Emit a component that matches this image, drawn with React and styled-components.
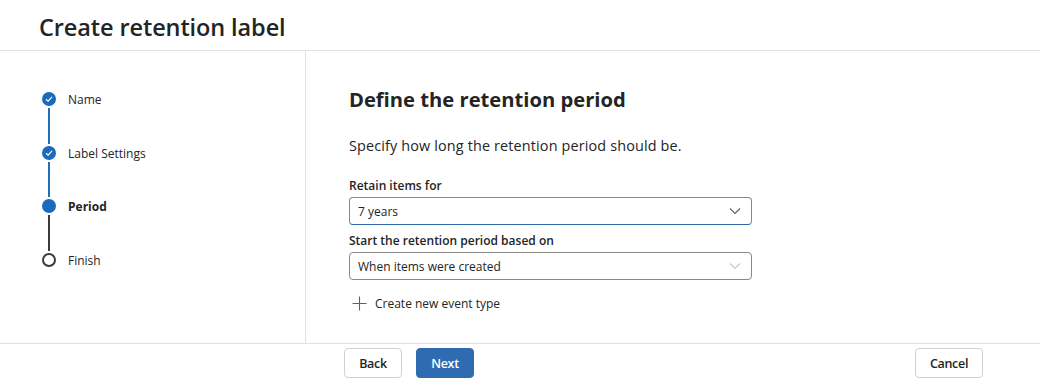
import React from 'react';
import styled, { createGlobalStyle } from 'styled-components';

const Global = createGlobalStyle`
  html, body {
    margin: 0;
    padding: 0;
    background: #fff;
  }
  body {
    font-family: "Open Sans", "Noto Sans", sans-serif;
    color: #242424;
  }
`;

const Page = styled.div`
  width: 1040px;
  height: 382px;
  display: flex;
  flex-direction: column;
  overflow: hidden;
`;

const Header = styled.header`
  height: 51px;
  flex: 0 0 51px;
  display: flex;
  align-items: center;
  padding-left: 39px;
  border-bottom: 1px solid #e1e1e1;
  box-sizing: border-box;
`;

const Title = styled.h1`
  margin: 0;
  font-size: 23.5px;
  font-weight: 600;
  letter-spacing: -0.1px;
  color: #242424;
  padding-top: 4px;
`;

const Body = styled.div`
  flex: 0 0 292px;
  display: flex;
`;

const Sidebar = styled.nav`
  width: 306px;
  flex: 0 0 306px;
  box-sizing: border-box;
  border-right: 1px solid #e1e1e1;
  padding: 41px 0 0 42px;
`;

const StepRow = styled.div`
  display: flex;
  gap: 12px;
  height: ${p => (p.last ? '14px' : '53.5px')};
`;

const Marker = styled.div`
  width: 14px;
  display: flex;
  flex-direction: column;
  align-items: center;
`;

const Dot = styled.div`
  width: 14px;
  height: 14px;
  flex: 0 0 14px;
  border-radius: 50%;
  box-sizing: border-box;
  display: flex;
  align-items: center;
  justify-content: center;
  background: ${p => (p.state === 'todo' ? '#fff' : '#1b6bbd')};
  border: ${p => (p.state === 'todo' ? '2px solid #3b3b3b' : 'none')};
`;

const Connector = styled.div`
  width: 2px;
  flex: 1;
  margin: 2px 0;
  background: ${p => (p.done ? '#1f6eb6' : '#3b3b3b')};
`;

const StepLabel = styled.span`
  font-size: 12px;
  line-height: 15px;
  font-weight: ${p => (p.current ? 700 : 400)};
  color: #242424;
`;

const Main = styled.main`
  flex: 1;
  padding: 34px 0 0 43px;
  box-sizing: border-box;
`;

const Heading = styled.h2`
  margin: 0;
  font-size: 20.2px;
  line-height: 28px;
  font-weight: 700;
  color: #242424;
`;

const Description = styled.p`
  margin: 23px 0 0;
  font-size: 14.4px;
  line-height: 20px;
  letter-spacing: 0.15px;
  color: #242424;
`;

const FieldLabel = styled.div`
  margin-top: ${p => p.gap}px;
  font-size: 12px;
  line-height: 18px;
  font-weight: 600;
  color: #242424;
`;

const Select = styled.div`
  margin-top: 2px;
  width: 403px;
  height: 28px;
  box-sizing: border-box;
  border: 1px solid #8a8886;
  border-bottom: 1px solid ${p => (p.focused ? '#2f6aa8' : '#8a8886')};
  border-radius: 4px;
  display: flex;
  align-items: center;
  justify-content: space-between;
  padding: 0 10px 0 8px;
  font-size: 12px;
  color: #242424;
`;

const Chevron = ({ light }) => (
  <svg width="12" height="8" viewBox="0 0 12 8">
    <path d="M1 1.5 L6 6.5 L11 1.5" fill="none" stroke={light ? '#c8c8c8' : '#616161'} strokeWidth="1.1" />
  </svg>
);

const AddLink = styled.div`
  margin-top: 15px;
  display: flex;
  align-items: center;
  gap: 8px;
  font-size: 12px;
  color: #242424;
  padding-left: 3px;
`;

const Footer = styled.footer`
  flex: 1;
  border-top: 1px solid #e1e1e1;
  display: flex;
  align-items: flex-start;
  padding: 4px 57px 0 344px;
  gap: 14px;
`;

const Button = styled.button`
  height: 30px;
  min-width: ${p => p.w}px;
  box-sizing: border-box;
  border-radius: 4px;
  font-family: "Open Sans", "Noto Sans", sans-serif;
  font-size: 12.5px;
  font-weight: 600;
  letter-spacing: -0.3px;
  cursor: pointer;
  border: 1px solid ${p => (p.primary ? '#2e6bb0' : '#d1d1d1')};
  background: ${p => (p.primary ? '#2e6bb0' : '#fff')};
  color: ${p => (p.primary ? '#fff' : '#242424')};
  margin-left: ${p => (p.push ? 'auto' : '0')};
`;

const steps = [
  { label: 'Name', state: 'done' },
  { label: 'Label Settings', state: 'done' },
  { label: 'Period', state: 'current' },
  { label: 'Finish', state: 'todo' },
];

const Check = () => (
  <svg width="8" height="8" viewBox="0 0 8 8">
    <path d="M1 4.2 L3.1 6.1 L7 1.9" fill="none" stroke="#fff" strokeWidth="1.2" />
  </svg>
);

export default function App() {
  return (
    <Page>
      <Global />
      <Header>
        <Title>Create retention label</Title>
      </Header>
      <Body>
        <Sidebar>
          {steps.map((s, i) => {
            const last = i === steps.length - 1;
            return (
              <StepRow key={s.label} last={last}>
                <Marker>
                  <Dot state={s.state}>{s.state === 'done' && <Check />}</Dot>
                  {!last && <Connector done={s.state === 'done'} />}
                </Marker>
                <StepLabel current={s.state === 'current'}>{s.label}</StepLabel>
              </StepRow>
            );
          })}
        </Sidebar>
        <Main>
          <Heading>Define the retention period</Heading>
          <Description>Specify how long the retention period should be.</Description>
          <FieldLabel gap={21}>Retain items for</FieldLabel>
          <Select focused>
            <span>7 years</span>
            <Chevron />
          </Select>
          <FieldLabel gap={7}>Start the retention period based on</FieldLabel>
          <Select>
            <span>When items were created</span>
            <Chevron light />
          </Select>
          <AddLink>
            <svg width="15" height="15" viewBox="0 0 15 15">
              <path d="M7.5 0.5 V14.5 M0.5 7.5 H14.5" stroke="#2e6bb0" strokeWidth="1.1" fill="none" />
            </svg>
            <span>Create new event type</span>
          </AddLink>
        </Main>
      </Body>
      <Footer>
        <Button w={58}>Back</Button>
        <Button w={58} primary>Next</Button>
        <Button w={68} push>Cancel</Button>
      </Footer>
    </Page>
  );
}
